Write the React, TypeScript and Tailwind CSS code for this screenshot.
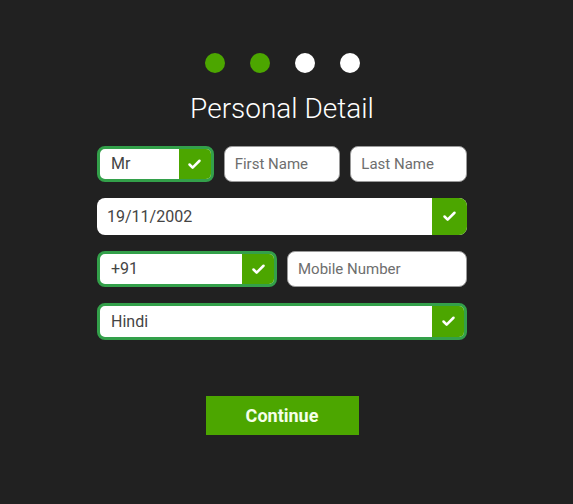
import { Check } from "lucide-react";

function CheckBox({ w = "w-[32px]" }: { w?: string }) {
  return (
    <div className={`${w} flex items-center justify-center bg-[#4ca600] text-white`}>
      <Check className="w-[15px] h-[15px]" strokeWidth={4} />
    </div>
  );
}

function Filled({
  value,
  bordered = true,
  checkW,
  h = "h-[36px]",
}: {
  value: string;
  bordered?: boolean;
  checkW?: string;
  h?: string;
}) {
  return (
    <div
      className={`${h} flex overflow-hidden rounded-[8px] bg-white ${
        bordered ? "border-[3px] border-[#33a04a]" : ""
      }`}
    >
      <div className={`flex-1 flex items-center text-[16px] text-[#444] ${bordered ? "pl-[11px]" : "pl-[10px]"}`}>
        {value}
      </div>
      <CheckBox w={checkW} />
    </div>
  );
}

function Empty({ placeholder }: { placeholder: string }) {
  return (
    <div className="h-[36px] flex items-center rounded-[8px] bg-white border border-[#9a9a9a] pl-[10px] text-[15px] text-[#6e6e6e]">
      {placeholder}
    </div>
  );
}

export default function App() {
  return (
    <div
      className="w-[573px] h-[504px] bg-[#212121]"
      style={{ fontFamily: "Roboto, 'Noto Sans', sans-serif" }}
    >
      <div className="w-[370px] ml-[97px] pt-[53px] flex flex-col">
        <div className="flex justify-center gap-[25px]">
          <span className="w-[20px] h-[20px] rounded-full bg-[#4ca600]" />
          <span className="w-[20px] h-[20px] rounded-full bg-[#4ca600]" />
          <span className="w-[20px] h-[20px] rounded-full bg-white" />
          <span className="w-[20px] h-[20px] rounded-full bg-white" />
        </div>
        <h1 className="mt-[19px] text-center text-[28px] leading-[34px] font-light text-white">
          Personal Detail
        </h1>
        <div className="mt-[20px] grid grid-cols-3 gap-[10px]">
          <Filled value="Mr" />
          <Empty placeholder="First Name" />
          <Empty placeholder="Last Name" />
        </div>
        <div className="mt-[16px]">
          <Filled value="19/11/2002" bordered={false} checkW="w-[35px]" h="h-[37px]" />
        </div>
        <div className="mt-[16px] grid grid-cols-2 gap-[10px]">
          <Filled value="+91" />
          <Empty placeholder="Mobile Number" />
        </div>
        <div className="mt-[16px]">
          <Filled value="Hindi" h="h-[37px]" />
        </div>
        <div className="mt-[56px] flex justify-center">
          <button className="w-[153px] h-[39px] bg-[#4ca600] text-[#f4ffe8] text-[18px] font-bold">
            Continue
          </button>
        </div>
      </div>
    </div>
  );
}
